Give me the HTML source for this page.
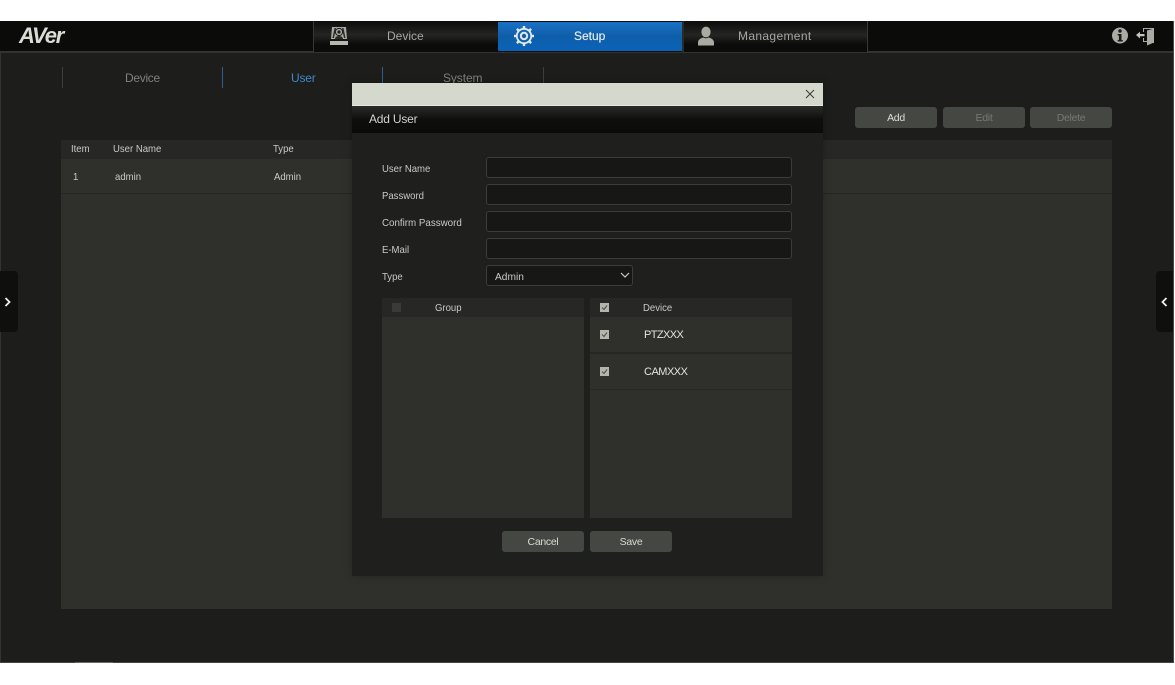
<!DOCTYPE html>
<html><head><meta charset="utf-8"><style>
html,body{margin:0;padding:0;background:#fff;width:1175px;height:685px;overflow:hidden}
*{box-sizing:border-box}
body{font-family:"Liberation Sans",sans-serif;position:relative}
.a{position:absolute}
.t{position:absolute;white-space:nowrap;line-height:14px;font-size:10.5px;color:#c9cac3;transform:scaleX(.91);transform-origin:0 50%}
.n{transform:none}
.inp{position:absolute;left:486px;width:306px;height:21px;background:#171816;border:1px solid #3c3d39;border-radius:3px}
.btn{position:absolute;width:82px;height:21px;background:#454742;border-radius:3px;text-align:center;line-height:22px;font-size:10.5px;letter-spacing:-.3px;color:#d8d9d3}
.cb{position:absolute;width:9px;height:9px;background:#b4b6ac}
.cb svg{display:block}
</style></head><body>
<div class="a" style="left:0;top:21px;width:1173px;height:642px;background:#1d1e1c;border-left:1px solid #333431;border-bottom:1px solid #454641;overflow:hidden"></div>
<div class="a" style="left:1173px;top:21px;width:1px;height:642px;background:#4a4b46"></div>
<div class="a" style="left:75px;top:662px;width:38px;height:1px;background:#6a6b64"></div>

<!-- header -->
<div class="a" style="left:0;top:21px;width:1173px;height:32px;background:#0b0c0a;border-bottom:2px solid #333431"></div>
<div class="t n" style="left:19px;top:24px;font-size:22px;line-height:24px;font-weight:bold;font-style:italic;color:#dcdcd4;letter-spacing:-1.2px">AVer</div>

<div class="a" style="left:313px;top:21px;width:555px;height:31px;background:linear-gradient(#0c0d0b,#242522 45%,#0b0c0a 75%,#0b0c0a);border-left:1px solid #383935;border-right:1px solid #383935"></div>
<div class="a" style="left:498px;top:22px;width:184px;height:29px;background:linear-gradient(#1a72c4,#0f5ea9 50%,#0a63b8)"></div>
<div class="a" style="left:682px;top:21px;width:2px;height:31px;background:#2b2c29"></div>
<div class="t n" style="left:387px;top:29px;font-size:12px;color:#a5a69f">Device</div>
<div class="t n" style="left:574px;top:29px;font-size:12px;color:#e6eaec;-webkit-text-stroke:.2px #e6eaec">Setup</div>
<div class="t n" style="left:738px;top:29px;font-size:12px;color:#a5a69f;letter-spacing:.35px">Management</div>

<!-- camera icon -->
<svg class="a" style="left:329px;top:26px" width="20" height="20" viewBox="0 0 20 20"><path d="M3 1h14l1 12H2z" fill="#a9aaa2"/><path d="M5.500 2h1.500L5 12H3.500zM13 2h1.500l2 10H15z" fill="#2a2b28"/><path d="M6 13c0-2 2-3 4-3s4 1 4 3z" fill="#2a2b28"/><circle cx="10" cy="6" r="3.600" fill="#a9aaa2" stroke="#1a1b19" stroke-width="1"/><circle cx="10" cy="6" r="1.600" fill="#1a1b19"/><rect x="1" y="15" width="18" height="4" fill="#b6b7ae"/></svg>
<!-- gear -->
<svg class="a" style="left:513px;top:25px" width="22" height="22" viewBox="0 0 22 22"><circle cx="11" cy="11" r="7.200" fill="none" stroke="#e4e8e8" stroke-width="1.800"/><circle cx="11" cy="11" r="3.200" fill="none" stroke="#e4e8e8" stroke-width="2"/><g stroke="#e4e8e8" stroke-width="2.400"><path d="M11 1v3M11 18v3M1 11h3M18 11h3M3.900 3.900l2.100 2.100M16 16l2.100 2.100M3.900 18.100L6 16M16 6l2.100-2.100"/></g></svg>
<!-- person -->
<svg class="a" style="left:697px;top:26px" width="18" height="20" viewBox="0 0 18 20"><ellipse cx="9" cy="6" rx="4.600" ry="5.400" fill="#a9aaa2"/><path d="M1 19.500v-3c0-3 3-4.500 5.500-5 1.500 1 3.500 1 5 0 2.500.5 5.500 2 5.500 5v3z" fill="#a9aaa2"/></svg>
<!-- info -->
<svg class="a" style="left:1112px;top:27px" width="16" height="17" viewBox="0 0 16 17"><circle cx="8" cy="8.500" r="8" fill="#aaaba3"/><circle cx="8" cy="4" r="1.700" fill="#1a1b19"/><path d="M5.700 7h3.800v6h1.200v1.500H5.700V13h1.200V8.500H5.700z" fill="#1a1b19"/></svg>
<!-- exit -->
<svg class="a" style="left:1136px;top:26px" width="20" height="20" viewBox="0 0 20 20"><path d="M7 2h11v15h-1V3H8v3H7z" fill="#aaaba3"/><path d="M11 4.500l7-2v14l-7 3z" fill="#aaaba3"/><path d="M0 9l4-3.200V8h4.500v2.200H4v2.300z" fill="#c4c5bd"/><path d="M7 12h1v3h3v1H7z" fill="#aaaba3"/></svg>

<!-- subtabs -->
<div class="a" style="left:62px;top:67px;width:1px;height:21px;background:#3e3f3b"></div>
<div class="a" style="left:222px;top:67px;width:1px;height:21px;background:#2c5f8e"></div>
<div class="a" style="left:382px;top:67px;width:1px;height:21px;background:#2c5f8e"></div>
<div class="a" style="left:543px;top:67px;width:1px;height:21px;background:#3e3f3b"></div>
<div class="t n" style="left:125px;top:71px;font-size:12px;letter-spacing:-.3px;color:#7f807a">Device</div>
<div class="t n" style="left:291px;top:71px;font-size:12px;letter-spacing:-.2px;color:#3f86cb">User</div>
<div class="t n" style="left:443px;top:71px;font-size:12px;letter-spacing:-.1px;color:#7f807a">System</div>

<!-- top-right buttons -->
<div class="btn" style="left:855px;top:107px;color:#dcddd6">Add</div>
<div class="btn" style="left:943px;top:107px;color:#787973">Edit</div>
<div class="btn" style="left:1030px;top:107px;color:#787973">Delete</div>

<!-- table -->
<div class="a" style="left:61px;top:140px;width:1051px;height:469px;background:#2f302b"></div>
<div class="a" style="left:61px;top:140px;width:1051px;height:19px;background:#272825"></div>
<div class="a" style="left:61px;top:193px;width:1051px;height:1px;background:#262724"></div>
<div class="t" style="left:71px;top:142px">Item</div>
<div class="t" style="left:113px;top:142px">User Name</div>
<div class="t" style="left:273px;top:142px">Type</div>
<div class="t" style="left:73px;top:170px">1</div>
<div class="t" style="left:115px;top:170px">admin</div>
<div class="t" style="left:274px;top:170px">Admin</div>

<!-- side handles -->
<div class="a" style="left:0;top:271px;width:18px;height:61px;background:#0f100e;border-radius:0 4px 4px 0"></div>
<svg class="a" style="left:4px;top:297px" width="8" height="10" viewBox="0 0 8 10"><path d="M1.500 1l4 4-4 4" fill="none" stroke="#eee" stroke-width="1.800"/></svg>
<div class="a" style="left:1156px;top:271px;width:17px;height:61px;background:#0f100e;border-radius:4px 0 0 4px"></div>
<svg class="a" style="left:1160px;top:297px" width="8" height="10" viewBox="0 0 8 10"><path d="M6.500 1l-4 4 4 4" fill="none" stroke="#eee" stroke-width="1.800"/></svg>

<!-- dialog -->
<div class="a" style="left:352px;top:83px;width:471px;height:493px;background:#1f201e;box-shadow:0 0 8px rgba(0,0,0,.25)"></div>
<div class="a" style="left:352px;top:83px;width:471px;height:23px;background:#d5d8cc;border-bottom:1px solid #e6e7dd"></div>
<div class="a" style="left:352px;top:106px;width:471px;height:27px;background:linear-gradient(#2b2c29,#0e0f0d 50%,#0b0c0a)"></div>
<svg class="a" style="left:805px;top:89px" width="10" height="10" viewBox="0 0 10 10"><path d="M1 1l8 8M9 1l-8 8" stroke="#3a3b38" stroke-width="1"/></svg>
<div class="t n" style="left:369px;top:112px;font-size:12px;letter-spacing:-.2px;color:#d2d3cc">Add User</div>

<div class="t" style="left:382px;top:162px">User Name</div>
<div class="t" style="left:382px;top:189px">Password</div>
<div class="t" style="left:382px;top:216px;transform:scaleX(.93)">Confirm Password</div>
<div class="t" style="left:382px;top:243px">E-Mail</div>
<div class="t" style="left:382px;top:270px">Type</div>
<div class="inp" style="top:157px;left:485.500px;width:306.500px"></div>
<div class="inp" style="top:184px;left:485.500px;width:306.500px"></div>
<div class="inp" style="top:211px;left:485.500px;width:306.500px"></div>
<div class="inp" style="top:238px;left:485.500px;width:306.500px"></div>
<div class="inp" style="top:265px;left:485.500px;width:147px"></div>
<div class="t" style="left:495px;top:270px;color:#c9cac3;transform:scaleX(.97)">Admin</div>
<svg class="a" style="left:620px;top:272px" width="10" height="7" viewBox="0 0 10 7"><path d="M1 1l4 4 4-4" fill="none" stroke="#c9cac3" stroke-width="1.200"/></svg>

<!-- lists -->
<div class="a" style="left:382px;top:298px;width:202px;height:220px;background:#2f302b"></div>
<div class="a" style="left:382px;top:298px;width:202px;height:19px;background:#272825"></div>
<div class="a" style="left:590px;top:298px;width:202px;height:220px;background:#2f302b"></div>
<div class="a" style="left:590px;top:298px;width:202px;height:19px;background:#272825"></div>
<div class="a" style="left:590px;top:352px;width:202px;height:2px;background:#262724"></div>
<div class="a" style="left:590px;top:389px;width:202px;height:1px;background:#262724"></div>

<div class="cb" style="left:392px;top:303px;background:#3a3b37"></div>
<div class="t" style="left:435px;top:301px">Group</div>
<div class="cb" style="left:600px;top:303px"><svg width="9" height="9" viewBox="0 0 9 9"><path d="M2 4.500l2 2 3-4" fill="none" stroke="#55564f" stroke-width="1.200"/></svg></div>
<div class="t" style="left:643px;top:301px">Device</div>
<div class="cb" style="left:600px;top:330px"><svg width="9" height="9" viewBox="0 0 9 9"><path d="M2 4.500l2 2 3-4" fill="none" stroke="#55564f" stroke-width="1.200"/></svg></div>
<div class="t n" style="left:644px;top:328px;font-size:11px;color:#e2e3dd;letter-spacing:-.6px">PTZXXX</div>
<div class="cb" style="left:600px;top:367px"><svg width="9" height="9" viewBox="0 0 9 9"><path d="M2 4.500l2 2 3-4" fill="none" stroke="#55564f" stroke-width="1.200"/></svg></div>
<div class="t n" style="left:644px;top:365px;font-size:11px;color:#e2e3dd;letter-spacing:-.5px">CAMXXX</div>

<div class="btn" style="left:502px;top:531px">Cancel</div>
<div class="btn" style="left:590px;top:531px">Save</div>
</body></html>
